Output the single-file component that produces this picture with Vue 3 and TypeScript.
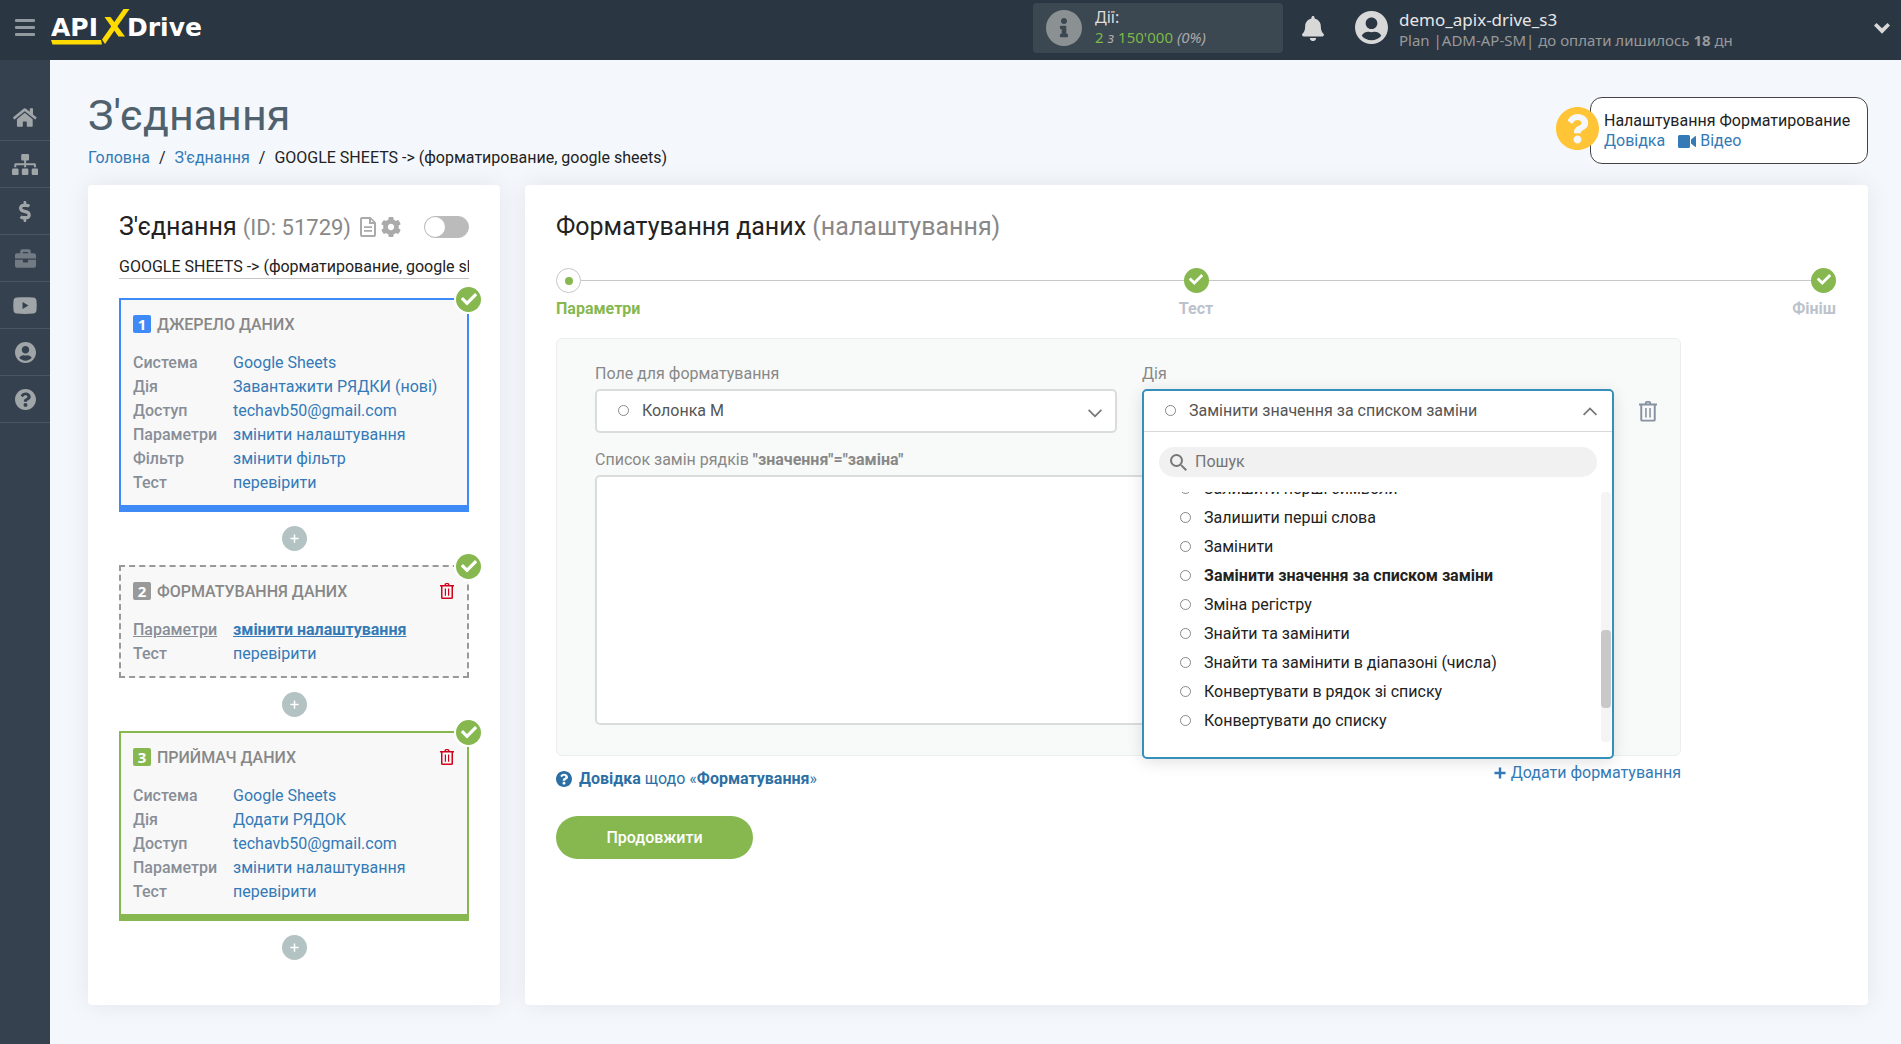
<script setup lang="ts">
import { h, ref } from 'vue'

interface Glyph {
  box: string
  d: string
}

const glyphs: Record<string, Glyph> = {
  home: {
    box: '0 0 576 512',
    d: 'M280.37 148.26L96 300.11V464a16 16 0 0 0 16 16l112.06-.29a16 16 0 0 0 15.92-16V368a16 16 0 0 1 16-16h64a16 16 0 0 1 16 16v95.64a16 16 0 0 0 16 16.05L464 480a16 16 0 0 0 16-16V300L295.67 148.26a12.19 12.19 0 0 0-15.3 0zM571.6 251.47L488 182.56V44.05a12 12 0 0 0-12-12h-56a12 12 0 0 0-12 12v72.61L318.47 43a48 48 0 0 0-61 0L4.34 251.47a12 12 0 0 0-1.6 16.9l25.5 31A12 12 0 0 0 45.15 301l235.22-193.74a12.19 12.19 0 0 1 15.3 0L530.9 301a12 12 0 0 0 16.9-1.6l25.5-31a12 12 0 0 0-1.7-16.93z',
  },
  sitemap: {
    box: '0 0 640 512',
    d: 'M128 352H32c-17.67 0-32 14.33-32 32v96c0 17.67 14.33 32 32 32h96c17.67 0 32-14.33 32-32v-96c0-17.67-14.33-32-32-32zm-24-80h192v48h48v-48h192v48h48v-57.59c0-21.17-17.23-38.41-38.41-38.41H344v-64h40c17.67 0 32-14.33 32-32V32c0-17.67-14.33-32-32-32H256c-17.67 0-32 14.33-32 32v96c0 17.67 14.33 32 32 32h40v64H94.41C73.23 224 56 241.23 56 262.41V320h48v-48zm264 80h-96c-17.67 0-32 14.33-32 32v96c0 17.67 14.33 32 32 32h96c17.67 0 32-14.33 32-32v-96c0-17.67-14.33-32-32-32zm240 0h-96c-17.67 0-32 14.33-32 32v96c0 17.67 14.33 32 32 32h96c17.67 0 32-14.33 32-32v-96c0-17.67-14.33-32-32-32z',
  },
  dollar: {
    box: '0 0 288 512',
    d: 'M209.2 233.4l-108-31.6C88.7 198.2 80 186.5 80 173.5c0-16.3 13.2-29.5 29.5-29.5h66.3c12.2 0 24.2 3.7 34.2 10.5 6.1 4.1 14.3 3.1 19.5-2l34.8-34c7.1-6.9 6.1-18.4-1.8-24.5C238 74.8 207.4 64.1 176 64V16c0-8.8-7.2-16-16-16h-32c-8.8 0-16 7.2-16 16v48h-2.5C45.8 64-5.4 118.7.5 183.6c4.2 46.1 39.4 83.6 83.8 96.6l102.5 30c12.5 3.7 21.2 15.3 21.2 28.3 0 16.3-13.2 29.5-29.5 29.5h-66.3C100 368 88 364.3 78 357.5c-6.1-4.1-14.3-3.1-19.5 2l-34.8 34c-7.1 6.9-6.1 18.4 1.8 24.5 24.5 19.2 55.1 29.9 86.5 30v48c0 8.8 7.2 16 16 16h32c8.8 0 16-7.2 16-16v-48.2c46.6-.9 90.3-28.6 105.7-72.7 21.5-61.6-14.6-124.8-72.5-141.7z',
  },
  briefcase: {
    box: '0 0 512 512',
    d: 'M320 336c0 8.84-7.16 16-16 16h-96c-8.84 0-16-7.16-16-16v-48H0v144c0 25.6 22.4 48 48 48h416c25.6 0 48-22.4 48-48V288H320v48zm144-208h-80V80c0-25.6-22.4-48-48-48H176c-25.6 0-48 22.4-48 48v48H48c-25.6 0-48 22.4-48 48v80h512v-80c0-25.6-22.4-48-48-48zm-144 0H192V96h128v32z',
  },
  youtube: {
    box: '0 0 24 17',
    d: 'M4 0.5C9 0 15 0 20 0.5C22.500 0.800 23.300 1.500 23.500 4C23.800 7 23.800 10 23.500 13C23.300 15.500 22.500 16.200 20 16.500C15 17 9 17 4 16.500C1.500 16.200 0.700 15.500 0.500 13C0.200 10 0.200 7 0.500 4C0.700 1.500 1.500 0.800 4 0.500ZM9.500 5V12L15.500 8.500Z',
  },
  user: {
    box: '0 8 496 496',
    d: 'M248 8C111 8 0 119 0 256s111 248 248 248 248-111 248-248S385 8 248 8zm0 96c48.6 0 88 39.4 88 88s-39.4 88-88 88-88-39.4-88-88 39.4-88 88-88zm0 344c-58.7 0-111.3-26.6-146.5-68.2 18.8-35.4 55.6-59.8 98.5-59.8 2.4 0 4.8.4 7.1 1.1 13 4.2 26.6 6.9 40.9 6.9 14.3 0 28-2.7 40.9-6.9 2.3-.7 4.7-1.1 7.1-1.1 42.9 0 79.7 24.4 98.5 59.8C359.3 421.4 306.7 448 248 448z',
  },
  question: {
    box: '8 8 496 496',
    d: 'M504 256c0 136.997-111.043 248-248 248S8 392.997 8 256C8 119.083 119.043 8 256 8s248 111.083 248 248zM262.655 90c-54.497 0-89.255 22.957-116.549 63.758-3.536 5.286-2.353 12.415 2.715 16.258l34.699 26.31c5.205 3.947 12.621 3.008 16.665-2.122 17.864-22.658 30.113-35.797 57.303-35.797 20.429 0 45.698 13.148 45.698 32.958 0 14.976-12.363 22.667-32.534 33.976C247.128 238.528 216 254.941 216 296v4c0 6.627 5.373 12 12 12h56c6.627 0 12-5.373 12-12v-1.333c0-28.462 83.186-29.647 83.186-106.667 0-58.002-60.165-102-116.531-102zM256 338c-25.365 0-46 20.635-46 46 0 25.364 20.635 46 46 46s46-20.636 46-46c0-25.365-20.635-46-46-46z',
  },
  info: {
    box: '8 8 496 496',
    d: 'M256 8C119.043 8 8 119.083 8 256c0 136.997 111.043 248 248 248s248-111.003 248-248C504 119.083 392.957 8 256 8zm0 110c23.196 0 42 18.804 42 42s-18.804 42-42 42-42-18.804-42-42 18.804-42 42-42zm56 254c0 6.627-5.373 12-12 12h-88c-6.627 0-12-5.373-12-12v-24c0-6.627 5.373-12 12-12h12v-64h-12c-6.627 0-12-5.373-12-12v-24c0-6.627 5.373-12 12-12h64c6.627 0 12 5.373 12 12v100h12c6.627 0 12 5.373 12 12v24z',
  },
  check: {
    box: '96 148 320 250',
    d: 'M227.314 387.314l184-184c6.248-6.248 6.248-16.379 0-22.627l-22.627-22.627c-6.248-6.249-16.379-6.249-22.628 0L216 308.118l-70.059-70.059c-6.248-6.248-16.379-6.248-22.628 0l-22.627 22.627c-6.248 6.248-6.248 16.379 0 22.627l104 104c6.249 6.249 16.379 6.249 22.628.001z',
  },
  bell: {
    box: '0 0 448 512',
    d: 'M224 512c35.32 0 63.97-28.65 63.97-64H160.03c0 35.35 28.65 64 63.97 64zm215.39-149.71c-19.32-20.76-55.47-51.99-55.47-154.29 0-77.7-54.48-139.9-127.94-155.16V32c0-17.67-14.32-32-31.98-32s-31.98 14.33-31.98 32v20.84C118.56 68.1 64.08 130.3 64.08 208c0 102.3-36.15 133.53-55.47 154.29-6 6.45-8.66 14.16-8.61 21.71.11 16.4 12.98 32 32.1 32h383.8c19.12 0 32-15.6 32.1-32 .05-7.55-2.61-15.27-8.61-21.71z',
  },
  cog: {
    box: '8 8 496 496',
    d: 'M487.4 315.7l-42.6-24.6c4.3-23.2 4.3-47 0-70.2l42.6-24.6c4.900-2.800 7.100-8.600 5.500-14-11.100-35.600-30-67.800-54.700-94.600-3.800-4.100-10-5.100-14.800-2.300L380.800 110c-17.900-15.400-38.500-27.300-60.800-35.100V25.800c0-5.600-3.900-10.500-9.400-11.700-36.700-8.200-74.300-7.800-109.200 0-5.500 1.200-9.400 6.100-9.400 11.700V75c-22.200 7.900-42.800 19.800-60.800 35.100L88.700 85.500c-4.900-2.800-11-1.900-14.800 2.300-24.700 26.700-43.600 58.900-54.700 94.600-1.700 5.400.6 11.200 5.500 14L67.300 221c-4.300 23.200-4.300 47 0 70.200l-42.600 24.600c-4.900 2.800-7.100 8.600-5.500 14 11.100 35.600 30 67.800 54.700 94.600 3.800 4.100 10 5.100 14.800 2.300l42.600-24.600c17.900 15.400 38.500 27.300 60.800 35.100v49.200c0 5.600 3.900 10.500 9.400 11.700 36.700 8.200 74.300 7.800 109.200 0 5.500-1.200 9.400-6.100 9.400-11.700v-49.200c22.200-7.900 42.800-19.800 60.800-35.100l42.600 24.600c4.900 2.800 11 1.900 14.800-2.300 24.700-26.700 43.600-58.900 54.700-94.600 1.500-5.500-.7-11.300-5.600-14.100zM256 336c-44.100 0-80-35.900-80-80s35.900-80 80-80 80 35.900 80 80-35.900 80-80 80z',
  },
  doc: {
    box: '0 0 16 20',
    d: 'M2 0H10.500L16 5.500V18A2 2 0 0 1 14 20H2A2 2 0 0 1 0 18V2A2 2 0 0 1 2 0ZM2 2V18H14V7H9V2ZM11 2.800V5H13.200ZM4 9.300H12V11.100H4ZM4 13H12V14.800H4Z',
  },
  trash: {
    box: '0 0 14 16',
    d: 'M4.500 2C4.500 0.700 5.200 0 6 0H8C8.800 0 9.500 0.700 9.500 2H14V3.500H13V14.500A1.500 1.500 0 0 1 11.500 16H2.500A1.500 1.500 0 0 1 1 14.500V3.500H0V2ZM6 2H8V1.300H6ZM2.500 3.500V14.500H11.500V3.500ZM4.800 5.500H6V12.800H4.800ZM8 5.500H9.200V12.800H8Z',
  },
  video: {
    box: '0 0 18 13',
    d: 'M1.500 0H10.500A1.500 1.500 0 0 1 12 1.500V11.500A1.500 1.500 0 0 1 10.500 13H1.500A1.500 1.500 0 0 1 0 11.500V1.500A1.500 1.500 0 0 1 1.500 0ZM13 4.500L17 1.200Q18 0.800 18 1.800V11.200Q18 12.200 17 11.800L13 8.500Z',
  },
  plus: {
    box: '0 0 12 12',
    d: 'M5 0.500H7V5H11.500V7H7V11.500H5V7H0.500V5H5Z',
  },
  plusBold: {
    box: '0 0 13 13',
    d: 'M5.200 0.500H7.800V5.200H12.500V7.800H7.800V12.500H5.200V7.800H0.500V5.200H5.200Z',
  },
  down: {
    box: '0 0 14 9',
    d: 'M1.200 0.200L7 6L12.800 0.200L14 1.500L7 8.500L0 1.500Z',
  },
  up: {
    box: '0 0 14 9',
    d: 'M1.200 8.500L7 2.700L12.800 8.500L14 7.200L7 0.200L0 7.200Z',
  },
  downBold: {
    box: '0 0 16 11',
    d: 'M2.500 0L8 5.300L13.500 0L16 2.500L8 10.800L0 2.500Z',
  },
  search: {
    box: '0 0 17 17',
    d: 'M6.500 0A6.500 6.500 0 1 1 6.500 13A6.500 6.500 0 1 1 6.500 0ZM6.500 2A4.500 4.500 0 1 0 6.500 11A4.500 4.500 0 1 0 6.500 2ZM10.200 11.500L11.500 10.200L17 15.500L15.500 17Z',
  },
}

const Icon = (props: { name: string }) =>
  h('svg', { viewBox: glyphs[props.name].box, 'aria-hidden': 'true' }, [
    h('path', { d: glyphs[props.name].d, fill: 'currentColor', 'fill-rule': 'evenodd' }),
  ])
Icon.props = ['name']

const nav = [
  { icon: 'home', label: 'Головна' },
  { icon: 'sitemap', label: "З'єднання" },
  { icon: 'dollar', label: 'Оплата' },
  { icon: 'briefcase', label: 'Проекти', dim: true },
  { icon: 'youtube', label: 'Відео' },
  { icon: 'user', label: 'Профіль' },
  { icon: 'question', label: 'Довідка' },
]

interface Row {
  label: string
  value: string
  active?: boolean
}
interface Block {
  kind: string
  title: string
  removable: boolean
  rows: Row[]
}

const blocks: Block[] = [
  {
    kind: 'source',
    title: 'ДЖЕРЕЛО ДАНИХ',
    removable: false,
    rows: [
      { label: 'Система', value: 'Google Sheets' },
      { label: 'Дія', value: 'Завантажити РЯДКИ (нові)' },
      { label: 'Доступ', value: 'techavb50@gmail.com' },
      { label: 'Параметри', value: 'змінити налаштування' },
      { label: 'Фільтр', value: 'змінити фільтр' },
      { label: 'Тест', value: 'перевірити' },
    ],
  },
  {
    kind: 'format',
    title: 'ФОРМАТУВАННЯ ДАНИХ',
    removable: true,
    rows: [
      { label: 'Параметри', value: 'змінити налаштування', active: true },
      { label: 'Тест', value: 'перевірити' },
    ],
  },
  {
    kind: 'target',
    title: 'ПРИЙМАЧ ДАНИХ',
    removable: true,
    rows: [
      { label: 'Система', value: 'Google Sheets' },
      { label: 'Дія', value: 'Додати РЯДОК' },
      { label: 'Доступ', value: 'techavb50@gmail.com' },
      { label: 'Параметри', value: 'змінити налаштування' },
      { label: 'Тест', value: 'перевірити' },
    ],
  },
]

const actions = [
  'Залишити перші символи',
  'Залишити перші слова',
  'Замінити',
  'Замінити значення за списком заміни',
  'Зміна регістру',
  'Знайти та замінити',
  'Знайти та замінити в діапазоні (числа)',
  'Конвертувати в рядок зі списку',
  'Конвертувати до списку',
]

const connectionName = ref('GOOGLE SHEETS -> (форматирование, google sheets)')
const enabled = ref(false)
const field = ref('Колонка M')
const action = ref('Замінити значення за списком заміни')
const replacements = ref('')
const query = ref('')
</script>

<template>
  <div class="page">
    <header class="topbar">
      <button class="burger" type="button" aria-label="Меню"><i></i><i></i><i></i></button>
      <a class="logo" href="#" aria-label="APIXDrive">
        <svg viewBox="0 0 154 38" width="154" height="38">
          <text x="0" y="28" class="logo-text">API</text>
          <text x="76" y="28" class="logo-text">Drive</text>
          <g fill="#ffdb00">
            <path d="M0 32H50L51 36.500H1.500Z" />
            <path d="M72.500 1H78.500L54 36L51 31.500Z" />
            <path d="M53.500 9H59.500L74 28.500H67.500Z" />
          </g>
        </svg>
      </a>
      <div class="usage">
        <Icon name="info" class="usage-icon" />
        <div class="usage-text">
          <div class="usage-title">Дії:</div>
          <div class="usage-count"><b>2</b> <em>з</em> <b>150'000</b> <em>(0%)</em></div>
        </div>
      </div>
      <button class="bell" type="button" aria-label="Сповіщення"><Icon name="bell" /></button>
      <div class="account">
        <Icon name="user" class="account-icon" />
        <div class="account-text">
          <div class="account-name">demo_apix-drive_s3</div>
          <div class="account-plan">Plan |ADM-AP-SM| до оплати лишилось <strong>18</strong> дн</div>
        </div>
        <button class="account-more" type="button" aria-label="Меню профілю"><Icon name="downBold" /></button>
      </div>
    </header>

    <div class="body">
      <nav class="sidebar">
        <a v-for="item in nav" :key="item.icon" href="#" :class="['nav-item', 'nav-' + item.icon, { dim: item.dim }]" :aria-label="item.label">
          <Icon :name="item.icon" />
        </a>
      </nav>

      <main class="main">
        <div class="page-head">
          <div>
            <h1>З'єднання</h1>
            <div class="crumbs">
              <a href="#">Головна</a><span class="slash">/</span><a href="#">З'єднання</a><span class="slash">/</span><span>GOOGLE SHEETS -&gt; (форматирование, google sheets)</span>
            </div>
          </div>
          <div class="help">
            <Icon name="question" class="help-icon" />
            <div>Налаштування Форматирование</div>
            <div class="help-links">
              <a href="#">Довідка</a>
              <a href="#" class="video"><Icon name="video" />Відео</a>
            </div>
          </div>
        </div>

        <div class="cards">
          <section class="card side">
            <div class="side-head">
              <h2>З'єднання <span class="ident">(ID: 51729)</span></h2>
              <button class="tool doc" type="button" aria-label="Журнал"><Icon name="doc" /></button>
              <button class="tool cog" type="button" aria-label="Налаштування"><Icon name="cog" /></button>
              <input v-model="enabled" class="toggle" type="checkbox" aria-label="Увімкнути" />
            </div>
            <input v-model="connectionName" class="name" type="text" aria-label="Назва" />
            <template v-for="(block, index) in blocks" :key="block.kind">
              <div :class="['block', block.kind]">
                <span class="done"><Icon name="check" /></span>
                <div class="block-head">
                  <span class="num">{{ index + 1 }}</span>
                  <h3>{{ block.title }}</h3>
                  <button v-if="block.removable" class="remove" type="button" aria-label="Видалити"><Icon name="trash" /></button>
                </div>
                <dl>
                  <div v-for="row in block.rows" :key="row.label" :class="['row', { active: row.active }]">
                    <dt>{{ row.label }}</dt>
                    <dd><a href="#">{{ row.value }}</a></dd>
                  </div>
                </dl>
              </div>
              <button class="add" type="button" aria-label="Додати блок"><Icon name="plus" /></button>
            </template>
          </section>

          <section class="card content">
            <h2>Форматування даних <span>(налаштування)</span></h2>

            <div class="track">
              <span class="dot"></span>
              <i></i>
              <span class="tick"><Icon name="check" /></span>
              <i></i>
              <span class="tick"><Icon name="check" /></span>
            </div>
            <ol class="steps">
              <li class="current">Параметри</li>
              <li>Тест</li>
              <li>Фініш</li>
            </ol>

            <div class="panel">
              <div class="cell">
                <label for="field">Поле для форматування</label>
                <div class="picker">
                  <select id="field" v-model="field">
                    <option>Колонка M</option>
                  </select>
                  <i class="ring"></i>
                  <Icon name="down" class="arrow" />
                </div>
              </div>
              <div class="cell">
                <label for="action">Дія</label>
                <div class="anchor">
                  <div class="dropdown">
                    <div class="picker">
                      <select id="action" v-model="action">
                        <option v-for="item in actions" :key="item">{{ item }}</option>
                      </select>
                      <i class="ring"></i>
                      <Icon name="up" class="arrow" />
                    </div>
                    <div class="search">
                      <Icon name="search" />
                      <input v-model="query" type="text" placeholder="Пошук" aria-label="Пошук" />
                    </div>
                    <div class="scroller">
                      <ul role="listbox" aria-label="Дія">
                        <li v-for="item in actions" :key="item" role="option" :aria-selected="item === action" :class="{ selected: item === action }">
                          <i class="ring"></i>{{ item }}
                        </li>
                      </ul>
                      <div class="bar"><i></i></div>
                    </div>
                  </div>
                </div>
              </div>
              <button class="drop" type="button" aria-label="Видалити форматування"><Icon name="trash" /></button>
              <div class="cell wide">
                <label for="list">Список замін рядків <strong>"значення"="заміна"</strong></label>
                <textarea id="list" v-model="replacements"></textarea>
              </div>
            </div>

            <div class="links">
              <a href="#" class="guide"><Icon name="question" /><strong>Довідка</strong> щодо «<strong>Форматування</strong>»</a>
              <a href="#" class="append"><Icon name="plusBold" />Додати форматування</a>
            </div>
            <button class="next" type="button">Продовжити</button>
          </section>
        </div>
      </main>
    </div>
  </div>
</template>

<style>
body {
  margin: 0;
  background: #f4f7fc;
}
</style>

<style scoped>
* {
  box-sizing: border-box;
}
.page {
  display: flex;
  flex-direction: column;
  min-height: 100vh;
  font: 400 16px/24px Roboto, sans-serif;
  color: #222;
}
svg {
  display: block;
  flex: none;
}
button {
  padding: 0;
  border: 0;
  background: none;
  font: inherit;
  color: inherit;
  cursor: pointer;
}
a {
  color: #337ab7;
  text-decoration: none;
}
h1,
h2,
h3,
dl,
dd,
ul,
ol {
  margin: 0;
  padding: 0;
  list-style: none;
}

.topbar {
  display: flex;
  align-items: flex-start;
  height: 60px;
  padding: 0 11px 0 15px;
  background: #2b3643;
  font-family: 'Noto Sans', sans-serif;
}
.burger {
  display: flex;
  flex-direction: column;
  gap: 4px;
  width: 20px;
  margin-top: 19px;
}
.burger i {
  width: 20px;
  height: 3px;
  border-radius: 1px;
  background: #929a9f;
}
.logo {
  margin: 8px auto 0 16px;
}
.logo-text {
  font: 700 25px 'DejaVu Sans', sans-serif;
  fill: #fff;
}
.usage {
  display: flex;
  align-items: center;
  width: 250px;
  height: 50px;
  margin-top: 3px;
  padding-left: 13px;
  border-radius: 4px;
  background: #3b4751;
}
.usage-icon {
  width: 36px;
  height: 36px;
  color: #8b9193;
}
.usage-text {
  margin-left: 13px;
  padding-bottom: 2px;
  font-size: 15px;
  line-height: 20px;
}
.usage-title {
  font-size: 16px;
  color: #ddd;
}
.usage-count {
  color: #aaa;
}
.usage-count b {
  font-weight: 400;
  color: #7cb848;
}
.bell {
  width: 22px;
  margin: 16px 31px 0 19px;
  color: #d8d8d8;
}
.account {
  display: flex;
  align-items: flex-start;
  width: 535px;
}
.account-icon {
  width: 33px;
  height: 33px;
  margin-top: 11px;
  color: #d8d8d8;
}
.account-text {
  margin: 10px auto 0 11px;
  line-height: 20px;
}
.account-name {
  font-size: 17px;
  color: #e6e6e6;
}
.account-plan {
  font-size: 15px;
  color: #999;
}
.account-more {
  width: 16px;
  margin-top: 23px;
  color: #d8d8d8;
}

.body {
  display: flex;
  flex: 1;
}
.sidebar {
  flex: none;
  width: 50px;
  padding-top: 34px;
  background: #364150;
}
.nav-item {
  display: flex;
  align-items: center;
  justify-content: center;
  height: 47px;
  border-bottom: 1px solid #4a5563;
  color: #a0a5a8;
}
.nav-item svg {
  height: 21px;
}
.nav-item.dim {
  color: #727b84;
}
.nav-youtube svg {
  height: 17px;
}

.main {
  display: flex;
  flex: 1;
  flex-direction: column;
  min-width: 0;
  padding: 29px 33px 39px 38px;
}
.page-head {
  display: flex;
  align-items: flex-start;
  justify-content: space-between;
  margin-bottom: 15px;
}
h1 {
  font-size: 43px;
  font-weight: 400;
  line-height: 52px;
  color: #4f616d;
}
.crumbs {
  margin-top: 5px;
}
.slash {
  margin: 0 9px;
}
.help {
  position: relative;
  min-width: 278px;
  height: 67px;
  margin-top: 8px;
  padding: 13px 13px 0;
  border: 1px solid #444;
  border-radius: 12px;
  background: #fff;
  line-height: 20px;
}
.help-icon {
  position: absolute;
  top: 9px;
  left: -35px;
  width: 43px;
  height: 43px;
  color: #ffc536;
}
.help-links {
  display: flex;
  gap: 13px;
}
.video {
  display: flex;
  gap: 4px;
  align-items: center;
}
.video svg {
  width: 18px;
}

.cards {
  display: flex;
  flex: 1;
  gap: 25px;
}
.card {
  padding: 26px 31px;
  border-radius: 4px;
  background: #fff;
  box-shadow: 0 0 25px rgba(0, 0, 0, 0.08);
}
h2 {
  font-size: 25px;
  font-weight: 400;
  line-height: 32px;
  color: #222;
}
h2 span {
  color: #888;
}
h2 .ident {
  font-size: 22px;
}
.side {
  flex: none;
  width: 412px;
}
.side-head {
  display: flex;
  align-items: center;
  height: 32px;
}
.tool {
  color: #aaa;
}
.doc {
  width: 16px;
  margin-left: 9px;
}
.cog {
  width: 20px;
  margin-left: 5px;
}
.toggle {
  appearance: none;
  width: 45px;
  height: 22px;
  margin: 0 0 0 auto;
  border: 1px solid #bbb;
  border-radius: 11px;
  background: #bbb;
}
.toggle::before {
  content: '';
  display: block;
  width: 20px;
  height: 20px;
  border-radius: 10px;
  background: #fff;
}
.toggle:checked {
  background: #86b84f;
}
.toggle:checked::before {
  margin-left: auto;
}
.name {
  width: 100%;
  height: 25px;
  margin: 11px 0 19px;
  padding: 0;
  border: 0;
  border-bottom: 1px solid #c4c4c4;
  font: inherit;
  color: inherit;
  outline: 0;
}
.block {
  position: relative;
  padding: 12px 12px 10px;
  border: 2px solid;
  border-bottom-width: 7px;
  background: #f8f8f8;
}
.source {
  border-color: #3e8af6;
}
.format {
  border: 2px dashed #999;
}
.target {
  border-color: #86b84f;
}
.done {
  position: absolute;
  top: -13px;
  right: -14px;
  display: flex;
  align-items: center;
  justify-content: center;
  width: 25px;
  height: 25px;
  border-radius: 50%;
  background: #86b84f;
  box-shadow: 0 0 0 2px #fff;
  color: #fff;
}
.done svg {
  width: 16px;
}
.block-head {
  display: flex;
  align-items: center;
  margin-bottom: 15px;
}
.num {
  width: 18px;
  height: 18px;
  border-radius: 2px;
  background: #999;
  font: 700 15px/18px 'Open Sans', sans-serif;
  text-align: center;
  color: #fff;
}
.source .num {
  background: #3e8af6;
}
.target .num {
  background: #86b84f;
}
h3 {
  margin-left: 6px;
  padding-top: 2px;
  font-size: 16px;
  font-weight: 500;
  line-height: 22px;
  color: #888;
}
.remove {
  width: 14px;
  margin: 0 1px 0 auto;
  color: #d0021b;
}
.row {
  display: grid;
  grid-template-columns: 100px 1fr;
}
dt {
  font-weight: 500;
  color: #888e97;
}
.active dt,
.active dd a {
  text-decoration: underline;
}
.active dd {
  font-weight: 700;
}
.add {
  display: flex;
  align-items: center;
  justify-content: center;
  width: 25px;
  height: 25px;
  margin: 14px auto;
  border-radius: 50%;
  background: #b3c2c2;
  color: #fff;
}
.add svg {
  width: 9px;
}

.content {
  flex: 1;
  min-width: 0;
  padding-right: 32px;
}
.track {
  display: flex;
  align-items: center;
  margin: 25px 0 4px;
}
.track i {
  flex: 1;
  height: 1px;
  background: #c6c8c6;
}
.dot,
.tick {
  display: flex;
  align-items: center;
  justify-content: center;
  width: 25px;
  height: 25px;
  border-radius: 50%;
}
.dot {
  border: 1px solid #c6c8c6;
}
.dot::before {
  content: '';
  width: 8px;
  height: 8px;
  border-radius: 50%;
  background: #86b84f;
}
.tick {
  padding-bottom: 2px;
  background: #86b84f;
  color: #fff;
}
.tick svg {
  width: 14px;
}
.steps {
  display: grid;
  grid-template-columns: repeat(3, 1fr);
  margin-bottom: 17px;
  font-weight: 700;
  text-align: center;
  color: #bcc2cb;
}
.steps li:first-child {
  text-align: left;
}
.steps li:last-child {
  text-align: right;
}
.steps .current {
  color: #86b84f;
}
.panel {
  display: grid;
  grid-template-columns: minmax(0, 522fr) minmax(0, 472fr) 18px;
  gap: 15px 25px;
  margin-right: 155px;
  padding: 23px 23px 30px 38px;
  border: 1px solid #ebeeed;
  border-radius: 6px;
  background: #f8faf9;
}
.cell label {
  display: block;
  margin-bottom: 3px;
  color: #888;
}
.wide {
  grid-column: 1 / 3;
}
.picker {
  position: relative;
}
select {
  appearance: none;
  display: block;
  width: 100%;
  height: 44px;
  padding: 0 45px;
  border: 2px solid #dadcdc;
  border-radius: 5px;
  background: #fff;
  font: inherit;
  color: #555;
  outline: 0;
}
.ring {
  flex: none;
  width: 11px;
  height: 11px;
  border: 1px solid #888;
  border-radius: 50%;
}
.picker .ring {
  position: absolute;
  top: 16px;
  left: 23px;
}
.arrow {
  position: absolute;
  top: 20px;
  right: 15px;
  width: 14px;
  color: #777;
}
.anchor {
  position: relative;
}
.dropdown {
  position: absolute;
  z-index: 2;
  top: 0;
  right: 0;
  left: 0;
  padding-bottom: 15px;
  border: 2px solid #358fba;
  border-radius: 5px;
  background: #fff;
  box-shadow: 0 3px 16px rgba(0, 0, 0, 0.12);
}
.dropdown select {
  height: 41px;
  border: 0;
  border-bottom: 1px solid #d8d8d8;
  border-radius: 4px 4px 0 0;
}
.dropdown .picker .ring {
  top: 14px;
  left: 21px;
}
.dropdown .arrow {
  top: 16px;
}
.search {
  display: flex;
  align-items: center;
  gap: 8px;
  height: 30px;
  margin: 15px;
  padding: 0 11px;
  border-radius: 15px;
  background: #f1f1f1;
  color: #777;
}
.search svg {
  width: 17px;
}
.search input {
  flex: 1;
  min-width: 0;
  padding: 0;
  border: 0;
  background: none;
  font: inherit;
  color: #222;
  outline: 0;
}
.search input::placeholder {
  color: #757575;
  opacity: 1;
}
.scroller {
  display: flex;
  justify-content: space-between;
  height: 250px;
  padding-right: 1px;
  overflow: hidden;
}
.scroller ul {
  margin-top: -18px;
  padding-left: 36px;
}
.scroller li {
  display: flex;
  align-items: center;
  gap: 13px;
  height: 29px;
  white-space: nowrap;
}
.selected {
  font-weight: 700;
}
.bar {
  width: 10px;
  padding-top: 138px;
  border-radius: 4px;
  background: #f4f4f4;
}
.bar i {
  display: block;
  height: 78px;
  border-radius: 4px;
  background: #c8c8c8;
}
.drop {
  align-self: start;
  margin-top: 39px;
  color: #8590a0;
}
textarea {
  display: block;
  width: 100%;
  height: 250px;
  padding: 10px;
  border: 2px solid #dadcdc;
  border-radius: 5px;
  background: #fff;
  font: inherit;
  color: #555;
  resize: none;
  outline: 0;
}
.links {
  display: flex;
  justify-content: space-between;
  margin: 5px 155px 25px 0;
}
.links a {
  white-space: pre;
}
.guide {
  display: flex;
  align-items: center;
  margin-top: 6px;
  color: #2c6fa4;
}
.guide svg {
  width: 16px;
  margin-right: 7px;
}
.append {
  display: flex;
  align-items: center;
  height: 24px;
}
.append svg {
  width: 12px;
  margin-right: 5px;
}
.next {
  width: 197px;
  height: 43px;
  border-radius: 22px;
  background: #86b84f;
  font-weight: 500;
  color: #fff;
}
</style>
